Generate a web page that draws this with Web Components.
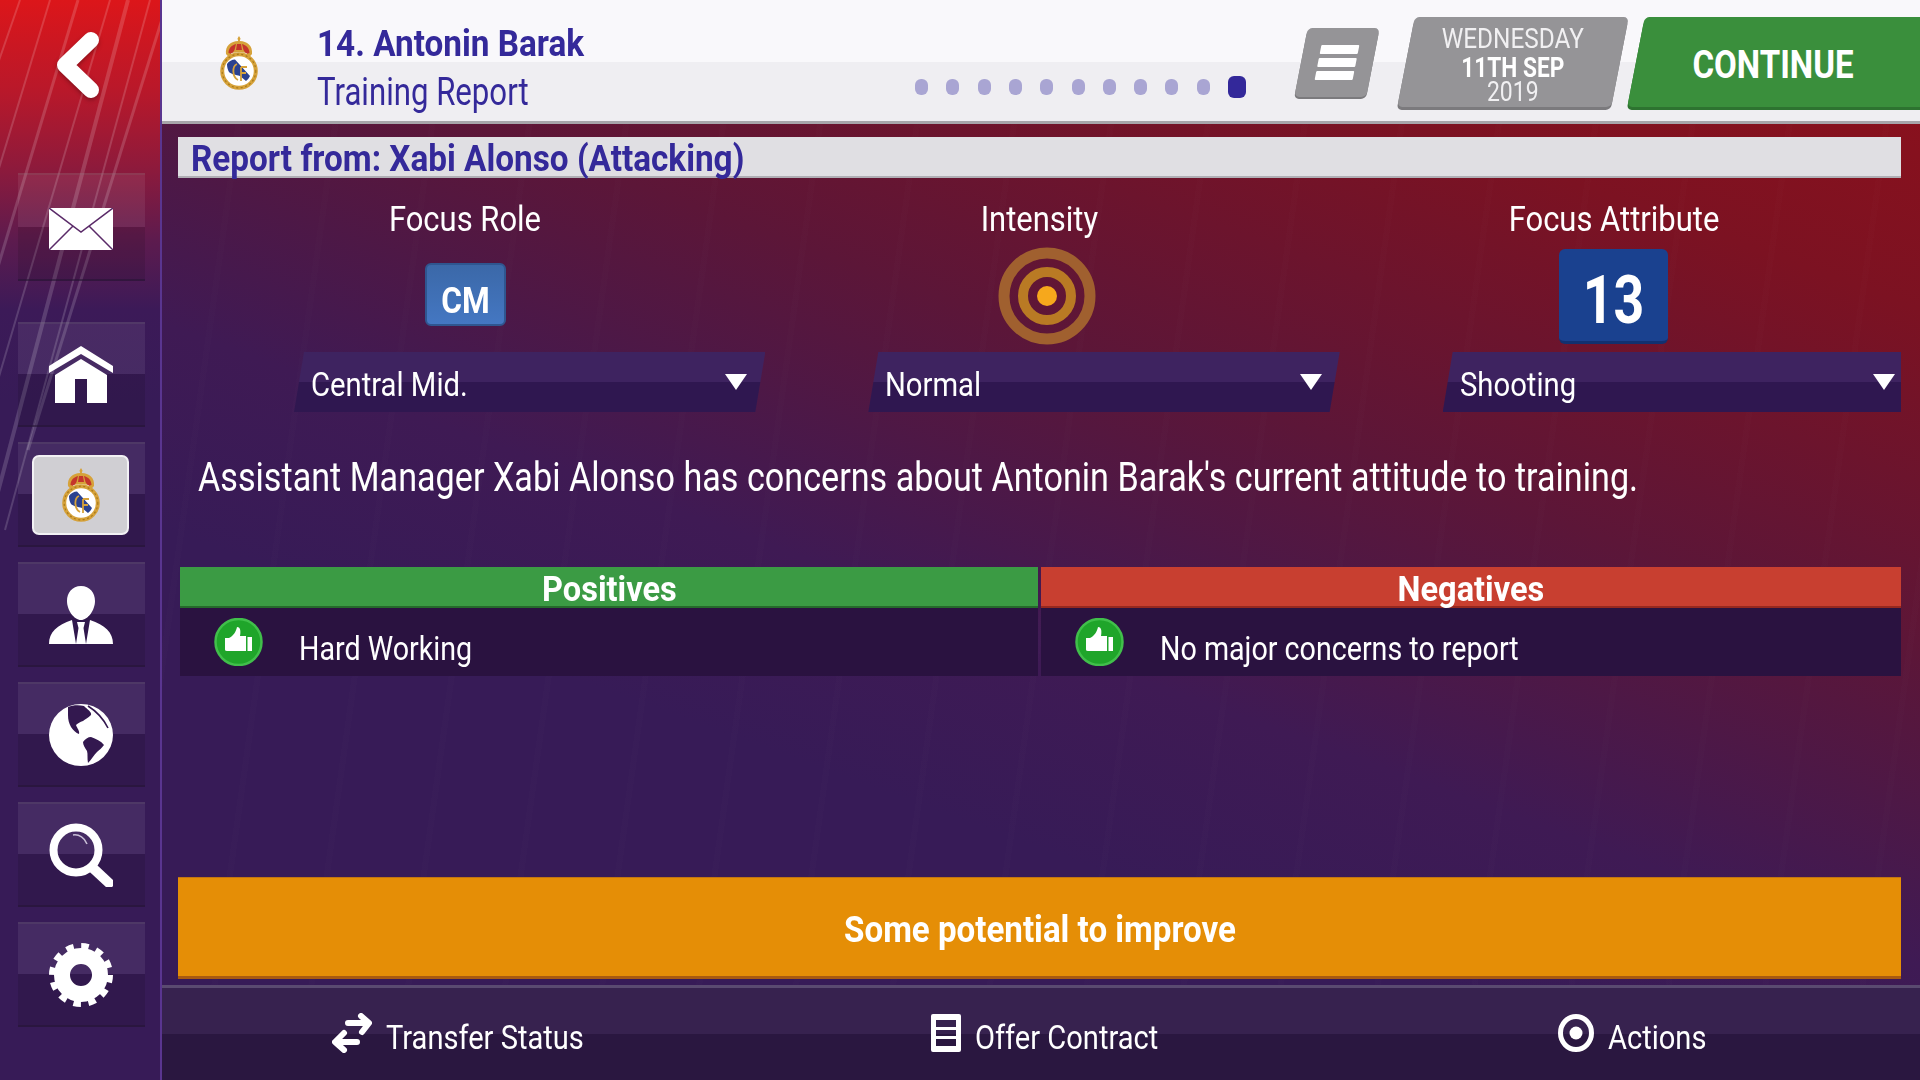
<!DOCTYPE html>
<html lang="en">
<head>
<meta charset="utf-8">
<title>Training Report</title>
<style>
  html, body { margin: 0; height: 100%; overflow: hidden; background: #371b57; }
  body { font-family: "Roboto", sans-serif; }
</style>
</head>
<body>
<fm-app>
  <fm-sidebar slot="side">
    <fm-nav-btn lead><svg width="64" height="42" viewBox="0 0 64 42"><rect width="64" height="42" fill="#fff"/><path d="M0 0 32 24 64 0M0 42 24 18M64 42 40 18" fill="none" stroke="#5a2a68" stroke-width="1.5"/></svg></fm-nav-btn>
    <fm-nav-btn><svg width="64" height="57" viewBox="0 0 64 57"><path fill="#fff" d="M32 0 64 20V27L32 8 0 27V20ZM32 13 58 29V57H38V33H26V57H6V29Z"/></svg></fm-nav-btn>
    <fm-nav-btn active><fm-crest></fm-crest></fm-nav-btn>
    <fm-nav-btn><svg width="64" height="58" viewBox="0 0 64 58"><path fill="#fff" d="M32 0C41 0 46 7 46 15 46 24 39 34 32 34 25 34 18 24 18 15 18 7 23 0 32 0ZM0 58C0 46 8 39 23 34L27 58ZM64 58C64 46 56 39 41 34L37 58ZM28 36H36L34.500 42 37 58H27L29.500 42Z"/></svg></fm-nav-btn>
    <fm-nav-btn><svg width="64" height="64" viewBox="0 0 64 64"><ellipse cx="32" cy="32" rx="32" ry="31" fill="#fff"/><path fill="#33184f" d="M19 4C24 2 30 2 35 3 38 6 43 9 42 12 39 15 36 16 34 18 31 19 29 20 27 22 28 25 31 28 30 31 27 30 24 27 22 24 20 20 19 17 19 12ZM34 39C36 36 39 34 42 34 47 36 52 38 55 42 53 45 50 47 48 49 45 52 42 57 39 60 38 56 39 51 38 48 36 45 34 42 34 39Z"/><path fill="none" stroke="#33184f" stroke-width="1.600" d="M39 3C47 8 54 15 59 25"/></svg></fm-nav-btn>
    <fm-nav-btn><svg width="64" height="64" viewBox="0 0 64 64"><circle cx="27" cy="27" r="22.500" fill="none" stroke="#fff" stroke-width="8"/><path d="M43 43 49 49" stroke="#fff" stroke-width="5"/><path d="M47 48 60 60" stroke="#fff" stroke-width="10" stroke-linecap="square"/><path d="M24 12C30 11 36 15 38 21" fill="none" stroke="#c9bfd6" stroke-width="1.500"/></svg></fm-nav-btn>
    <fm-nav-btn><svg width="64" height="64" viewBox="0 0 64 64"><circle cx="32" cy="32" r="19" fill="none" stroke="#fff" stroke-width="16"/><circle cx="32" cy="32" r="28" fill="none" stroke="#fff" stroke-width="8" stroke-dasharray="7.330 7.330"/></svg></fm-nav-btn>
  </fm-sidebar>

  <fm-header slot="head" number="14" name="Antonin Barak" sub="Training Report"></fm-header>

  <fm-report-bar slot="body">Report from: Xabi Alonso (Attacking)</fm-report-bar>

  <fm-focus-row slot="body">
    <fm-focus label="Focus Role" value="Central Mid."><fm-badge kind="role">CM</fm-badge></fm-focus>
    <fm-focus label="Intensity" value="Normal">
      <svg style="transform:translate(8px,-1px)" width="98" height="98" viewBox="0 0 98 98"><circle cx="49" cy="49" r="43" fill="none" stroke="#a0602f" stroke-width="11"/><circle cx="49" cy="49" r="24" fill="none" stroke="#b97a24" stroke-width="10"/><circle cx="49" cy="49" r="10" fill="#f6a81c"/></svg>
    </fm-focus>
    <fm-focus label="Focus Attribute" value="Shooting" flush><fm-badge kind="attr">13</fm-badge></fm-focus>
  </fm-focus-row>

  <fm-comment slot="body">Assistant Manager Xabi Alonso has concerns about Antonin Barak's current attitude to training.</fm-comment>

  <fm-verdicts slot="body">
    <fm-verdict title="Positives" tone="good">Hard Working</fm-verdict>
    <fm-verdict title="Negatives" tone="bad">No major concerns to report</fm-verdict>
  </fm-verdicts>

  <fm-banner slot="body">Some potential to improve</fm-banner>

  <fm-footer slot="foot">
    <fm-foot-item pad="170">
      <svg slot="icon" width="40" height="40" viewBox="0 0 40 40"><path fill="none" stroke="#fff" stroke-width="6" stroke-linecap="round" stroke-linejoin="round" d="M16 10H36M29 3 37 10 30 19M25 29H5M12 20 3 29 12 37"/></svg>
      Transfer Status
    </fm-foot-item>
    <fm-foot-item pad="183">
      <svg slot="icon" width="30" height="38" viewBox="0 0 30 38"><path fill="#fff" fill-rule="evenodd" d="M2 0H28Q30 0 30 2V36Q30 38 28 38H2Q0 38 0 36V2Q0 0 2 0ZM5 6V13H25V6ZM5 16V22H25V16ZM5 25V32H25V25Z"/></svg>
      Offer Contract
    </fm-foot-item>
    <fm-foot-item pad="224">
      <svg slot="icon" width="36" height="38" viewBox="0 0 36 38"><ellipse cx="18" cy="19" rx="15.500" ry="16.500" fill="none" stroke="#fff" stroke-width="5"/><circle cx="18" cy="19" r="6.500" fill="#fff"/></svg>
      Actions
    </fm-foot-item>
  </fm-footer>
</fm-app>

<script>
// small helper, every component is the same shape
function define(tag, html) {
  customElements.define(tag, class extends HTMLElement {
    constructor() {
      super();
      this.attachShadow({ mode: 'open' });
    }
    connectedCallback() {
      const attrs = {};
      for (const a of this.attributes) attrs[a.name] = a.value;
      this.shadowRoot.innerHTML = typeof html === 'function' ? html(attrs) : html;
    }
  });
}

// the game font is narrower than anything installed, so text gets squeezed
const NARROW = `.n { display: inline-block; white-space: nowrap; transform: scaleX(.86); transform-origin: left center; }
  .nb { display: inline-block; white-space: nowrap; transform: scaleX(.9); transform-origin: left center; }
  .c { transform: scaleX(.885); transform-origin: center; }`;

define('fm-app', `
  <style>
    :host { display: grid; grid-template-columns: 162px 1fr; width: 1920px; height: 1080px; overflow: hidden; color: #fff; }
    .main {
      display: flex; flex-direction: column; min-width: 0; height: 1080px;
      background:
        repeating-linear-gradient(98deg, rgba(255,255,255,0) 0 90px, rgba(255,255,255,.008) 90px 96px),
        linear-gradient(200deg, #90101a 0%, #7c1222 18%, #5c1638 38%, #3f1a54 56%, #371b57 68%);
    }
    .body { flex: 1; display: flex; flex-direction: column; padding: 13px 19px 6px 16px; min-height: 0; }
  </style>
  <slot name="side"></slot>
  <div class="main">
    <slot name="head"></slot>
    <div class="body"><slot name="body"></slot></div>
    <slot name="foot"></slot>
  </div>
`);

define('fm-sidebar', `
  <style>
    :host {
      display: flex; flex-direction: column; position: relative; box-sizing: border-box; height: 1080px;
      border-right: 2px solid #5a3590;
      background: linear-gradient(180deg, #dc161a 0, #b9182a 90px, #8c1a3c 170px, #5d1b4e 240px, #3c1a58 310px, #371b57 400px);
    }
    .stripes { position: absolute; left: 0; top: 0; }
    .back { position: relative; height: 173px; box-sizing: border-box; padding: 32px 0 0 56px; }
    .list { position: relative; }
  </style>
  <svg class="stripes" width="160" height="570" viewBox="0 0 160 570">
    <g stroke="#fff" fill="none" stroke-opacity=".16">
      <path d="M-120 560 50 0" stroke-width="2"/><path d="M-90 560 78 0" stroke-width="3"/>
      <path d="M-55 560 110 0" stroke-width="2"/><path d="M-20 560 128 0" stroke-width="4"/>
      <path d="M5 530 150 0" stroke-width="2"/><path d="M28 450 168 0" stroke-width="3"/>
      <path d="M-140 460 20 0" stroke-width="2"/>
    </g>
  </svg>
  <div class="back">
    <svg width="44" height="66" viewBox="0 0 44 66" style="filter:drop-shadow(0 2px 2px rgba(0,0,0,.3))"><path d="M35 8 9 33 35 58" fill="none" stroke="#fff" stroke-width="16" stroke-linecap="round" stroke-linejoin="round"/></svg>
  </div>
  <div class="list"><slot></slot></div>
`);

define('fm-nav-btn', a => `
  <style>
    :host { display: block; }
    .btn {
      height: ${'lead' in a ? 108 : 105}px; box-sizing: border-box; margin: 0 15px ${'lead' in a ? 41 : 15}px 18px;
      padding: ${'lead' in a ? 4 : 0}px 2px 0 0;
      display: flex; align-items: center; justify-content: center;
      border-top: 2px solid rgba(255,255,255,.14); border-bottom: 2px solid rgba(20,5,35,.55);
      background: linear-gradient(rgba(255,255,255,.07) 50%, rgba(0,0,0,.11) 50%);
    }
    .tile {
      width: 97px; height: 80px; box-sizing: border-box; border: 2px solid #f2f1f4; border-radius: 7px;
      background: #d0cfd3; display: flex; align-items: center; justify-content: center;
    }
    ::slotted(svg) { display: block; }
  </style>
  <div class="btn">${'active' in a ? '<div class="tile"><slot></slot></div>' : '<slot></slot>'}</div>
`);

define('fm-crest', `
  <style>:host { display: block; width: 40px; height: 54px; } svg { display: block; }</style>
  <svg width="40" height="54" viewBox="0 0 40 54">
    <path fill="#d6a23a" d="M20 0 21.500 2.500 20.800 5C28 5 34 10 33 18L29.500 22H10.500L7 18C6 10 12 5 19.200 5L18.500 2.500Z"/>
    <path fill="#c4352c" d="M9.500 17C9.500 12 13 9 17 8L15.500 14 13 18ZM30.500 17C30.500 12 27 9 23 8L24.500 14 27 18ZM18 8H22L23 14H17Z"/>
    <path fill="#f4f0e6" d="M12 17.500C16 15.500 24 15.500 28 17.500L27.500 21H12.500Z"/>
    <circle cx="20" cy="35" r="16.800" fill="#fff" stroke="#d6a23a" stroke-width="4"/>
    <circle cx="20" cy="35" r="16.800" fill="none" stroke="#a97a1c" stroke-width="1.200" stroke-dasharray="2 2.500"/>
    <path fill="#2a4290" d="M8 28C10 25 13 23.500 16 23.500L31 40C30 42 28.500 44 27 45L21 40C17 39 12 38 10 36 8.500 33 8 31 8 28Z"/>
    <path fill="none" stroke="#d6a23a" stroke-width="1.800" d="M18 28C13 30 13 41 19 44M22 31V45M22 31H28M22 37H27"/>
  </svg>
`);

define('fm-header', a => `
  <style>
    ${NARROW}
    :host {
      display: flex; align-items: stretch; height: 124px; box-sizing: border-box; overflow: hidden;
      background: linear-gradient(#f9f8fb 62px, #efeef2 62px);
      border-bottom: 3px solid #a7a5aa; color: #34299a;
    }
    .crest { margin: 36px 0 0 57px; }
    .who { margin-left: 58px; padding-top: 22px; width: 300px; }
    .name { font-size: 37px; font-weight: 700; line-height: 44px; }
    .sub { font-size: 38px; line-height: 46px; margin-top: 3px; }
    .sub .n { transform: scaleX(.82); }
    .dots { margin-left: auto; display: flex; align-items: center; gap: 18.300px; height: 22px; margin-top: 76px; }
    .dots i { width: 13px; height: 16px; border-radius: 6px; background: #a9a5d3; }
    .dots i.on { width: 18px; height: 22px; background: #33289a; }
    .menu, .date, .go { transform: skewX(-11deg); display: flex; flex-direction: column; align-items: center; justify-content: center; }
    .menu { width: 72px; height: 69px; margin: 28px 0 0 55px; border-radius: 5px; background: #959497; box-shadow: 0 2px 0 #7b7a7d; gap: 4px; }
    .menu b { width: 38px; height: 9px; background: #fff; border-radius: 1px; }
    .date {
      width: 214px; height: 90px; margin: 17px 0 0 33px; border-radius: 5px; background: #959497;
      box-shadow: 0 3px 0 #7b7a7d; color: #f1f0f2; font-size: 28px; line-height: 29px;
    }
    .stack { transform: skewX(11deg); text-align: center; padding-top: 6px; }
    .stack span { display: block; transform: scaleX(.87); }
    .stack .d { font-weight: 700; color: #fff; transform: scaleX(.81); }
    .stack .y { transform: scaleX(.82); margin-top: -5px; }
    .go {
      width: 320px; height: 90px; margin: 17px -36px 0 16px; flex: none; border-radius: 5px 0 0 5px;
      background: #3a8f3c; box-shadow: 0 3px 0 #2d7330; color: #fff; font-size: 38px; font-weight: 700;
      align-items: flex-start; padding: 5px 0 0 57px; box-sizing: border-box;
    }
    .go span { display: inline-block; transform: skewX(11deg) scaleX(.87); transform-origin: left center; }
  </style>
  <fm-crest class="crest"></fm-crest>
  <div class="who">
    <div class="name"><span class="nb">${a.number}. ${a.name}</span></div>
    <div class="sub"><span class="n">${a.sub}</span></div>
  </div>
  <div class="dots"><i></i><i></i><i></i><i></i><i></i><i></i><i></i><i></i><i></i><i></i><i class="on"></i></div>
  <div class="menu"><b></b><b></b><b></b></div>
  <div class="date"><div class="stack"><span>WEDNESDAY</span><span class="d">11TH SEP</span><span class="y">2019</span></div></div>
  <div class="go"><span>CONTINUE</span></div>
`);

define('fm-report-bar', `
  <style>
    ${NARROW}
    :host {
      display: block; height: 41px; box-sizing: border-box; padding-left: 13px;
      background: #e0dfe3; border-bottom: 2px solid #b0aeb4; color: #34299a;
      font-size: 37px; font-weight: 700; line-height: 43px;
    }
  </style>
  <span class="nb"><slot></slot></span>
`);

define('fm-focus-row', `
  <style>:host { display: grid; grid-template-columns: repeat(3, 1fr); margin-top: 22px; }</style>
  <slot></slot>
`);

define('fm-focus', a => `
  <style>
    ${NARROW}
    :host { display: block; min-width: 0; }
    .label { font-size: 35px; line-height: 40px; text-align: center; }
    .icon { height: 105px; display: flex; align-items: center; justify-content: center; margin-top: 4px; }
    .select {
      display: flex; align-items: center; justify-content: space-between; box-sizing: border-box;
      height: 60px; margin: 3px ${'flush' in a ? '0' : '-13px'} 0 116px; padding: 4px ${'flush' in a ? '6px' : '18px'} 0 17px;
      font-size: 34px;
      background: linear-gradient(#3e2360 50%, #2f1750 50%);
      clip-path: polygon(10px 0, 100% 0, ${'flush' in a ? '100%' : 'calc(100% - 10px)'} 100%, 0 100%);
    }
    .select svg { display: block; margin-top: -5px; }
  </style>
  <div class="label"><span class="n c">${a.label}</span></div>
  <div class="icon"><slot></slot></div>
  <div class="select"><span class="n">${a.value}</span><svg width="22" height="16" viewBox="0 0 22 16"><path d="M0 0H22L11 16Z" fill="#fff"/></svg></div>
`);

define('fm-badge', a => `
  <style>
    :host { display: block; }
    .b { display: flex; align-items: center; justify-content: center; font-weight: 700; color: #fff; box-sizing: border-box; }
    .b span { display: inline-block; transform: scaleX(.88); }
    .role { width: 81px; height: 63px; font-size: 36px; padding-top: 13px; border-radius: 6px; background: linear-gradient(#3b68a8, #4477c2); border: 2px solid #2f5690; margin-top: -5px; }
    .attr { width: 109px; height: 95px; font-size: 67px; padding-top: 10px; border-radius: 6px; background: #1a418f; border-bottom: 3px solid #12306f; }
    .attr span { transform: scaleX(.8); }
  </style>
  <div class="b ${a.kind}"><span><slot></slot></span></div>
`);

define('fm-comment', `
  <style>
    ${NARROW}
    :host { display: block; margin: 41px 0 0 20px; font-size: 40px; line-height: 50px; height: 114px; }
    .n { transform: scaleX(.854); }
  </style>
  <span class="n"><slot></slot></span>
`);

define('fm-verdicts', `
  <style>:host { display: grid; grid-template-columns: 858px 860px; gap: 3px; margin-left: 2px; }</style>
  <slot></slot>
`);

define('fm-verdict', a => `
  <style>
    ${NARROW}
    :host { display: block; }
    .head {
      height: 41px; box-sizing: border-box; text-align: center; font-size: 35px; font-weight: 700; line-height: 46px;
      background: ${a.tone === 'good' ? '#3b9b44' : '#c83f30'};
      border-bottom: 2px solid ${a.tone === 'good' ? '#256a2b' : '#96281f'};
    }
    .head .nb { transform: scaleX(.93); transform-origin: center; }
    .row { height: 68px; display: flex; align-items: center; gap: 36px; padding-left: 34px; background: #2a1240; font-size: 33px; }
    .text { padding-top: 13px; }
    .n { transform: scaleX(.868); }
    svg { display: block; align-self: flex-start; margin-top: 10px; }
  </style>
  <div class="head"><span class="nb">${a.title}</span></div>
  <div class="row">
    <svg width="49" height="48" viewBox="0 0 49 48">
      <circle cx="24.500" cy="24" r="23" fill="#1fa52a" stroke="#41bf4b" stroke-width="2.500"/>
      <path fill="#fff" d="M11 20H15C19 18 22 14 23 9 26 9 27 12 26 18H32V33H13C11 33 11 32 11 31ZM33.500 19H38V33H33.500Z"/>
    </svg>
    <div class="text"><span class="n"><slot></slot></span></div>
  </div>
`);

define('fm-banner', `
  <style>
    ${NARROW}
    :host {
      display: block; margin-top: auto; height: 102px; box-sizing: border-box; text-align: center;
      background: #e58e06; border-bottom: 3px solid #a85a10; border-top: 1px solid #c27512;
      font-size: 36px; font-weight: 700; line-height: 104px;
    }
    .nb { transform: scaleX(.92); transform-origin: center; }
  </style>
  <span class="nb"><slot></slot></span>
`);

define('fm-footer', `
  <style>
    :host {
      display: grid; grid-template-columns: repeat(3, 1fr); height: 95px; box-sizing: border-box;
      background: linear-gradient(#37224f 50%, #2a1740 50%);
      border-top: 3px solid #5a4a70; padding-top: 4px;
    }
  </style>
  <slot></slot>
`);

define('fm-foot-item', a => `
  <style>
    ${NARROW}
    :host { display: flex; align-items: center; gap: 14px; font-size: 34px; padding-left: ${a.pad}px; min-width: 0; }
    ::slotted(svg) { display: block; margin-top: -6px; flex: none; }
    span.wrap { padding-top: 1px; }
    .n { transform: scaleX(.855); }
  </style>
  <slot name="icon"></slot><span class="wrap"><span class="n"><slot></slot></span></span>
`);
</script>
</body>
</html>
